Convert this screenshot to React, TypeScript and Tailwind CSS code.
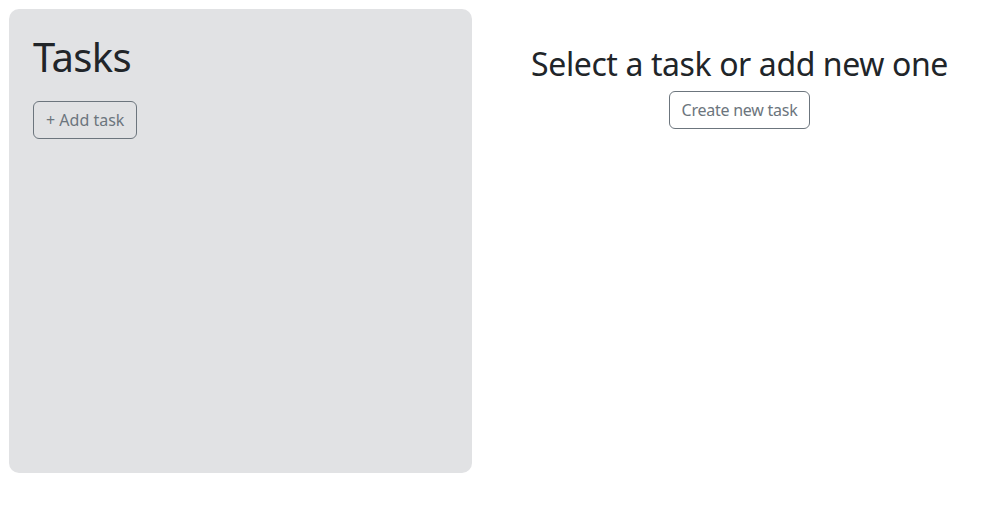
export default function App() {
  return (
    <div className="w-[988px] h-[508px] bg-white flex pl-[9px] pt-[9px]" style={{ fontFamily: '"Noto Sans", sans-serif' }}>
      <div className="w-[463px] h-[464px] bg-[#e1e2e4] rounded-[10px] px-6 pt-6 flex flex-col items-start">
        <h1 className="text-[40px] leading-[48px] tracking-[-0.6px] text-[#212529] mb-5">Tasks</h1>
        <button className="h-[38px] px-3 border border-[#6c757d] rounded-md text-[#6c757d] text-base">+ Add task</button>
      </div>
      <div className="flex-1 ml-[19px] flex flex-col items-center pt-[36px]">
        <h2 className="text-[32px] leading-[38px] tracking-[-0.4px] text-[#212529] mb-2">Select a task or add new one</h2>
        <button className="h-[38px] px-3 border border-[#6c757d] rounded-md text-[#6c757d] text-base tracking-[-0.25px]">Create new task</button>
      </div>
    </div>
  );
}
